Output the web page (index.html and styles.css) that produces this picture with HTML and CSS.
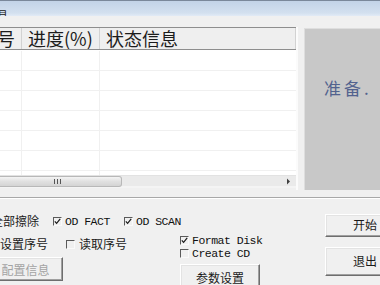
FILE: index.html
```html
<!DOCTYPE html>
<html>
<head>
<meta charset="utf-8">
<link rel="stylesheet" href="styles.css">
</head>
<body>
<div class="window">
  <div class="titlebar"><span class="title">工具</span></div>

  <div class="top">
    <div class="listview">
      <div class="lv-header">
        <div class="hcol c1">序号</div>
        <div class="hcol c2">进度(%)</div>
        <div class="hcol c3">状态信息</div>
      </div>
      <div class="lv-body">
        <div class="row"><span class="cell c1"></span><span class="cell c2"></span><span class="cell c3"></span></div>
        <div class="row"><span class="cell c1"></span><span class="cell c2"></span><span class="cell c3"></span></div>
        <div class="row"><span class="cell c1"></span><span class="cell c2"></span><span class="cell c3"></span></div>
        <div class="row"><span class="cell c1"></span><span class="cell c2"></span><span class="cell c3"></span></div>
        <div class="row"><span class="cell c1"></span><span class="cell c2"></span><span class="cell c3"></span></div>
        <div class="row"><span class="cell c1"></span><span class="cell c2"></span><span class="cell c3"></span></div>
        <div class="row"><span class="cell c1"></span><span class="cell c2"></span><span class="cell c3"></span></div>
      </div>
      <div class="hscroll">
        <div class="thumb"><span class="grip"></span></div>
        <div class="track"></div>
        <svg class="arrow" width="5" height="7" viewBox="0 0 5 7"><path d="M1 0.5 L4 3.5 L1 6.5 Z" fill="#404040"/></svg>
      </div>
    </div>
    <div class="status-panel"><span class="status-text">准备.</span></div>
  </div>

  <div class="separator"></div>

  <div class="bottom">
    <div class="left">
      <div class="row1">
        <label class="opt"><span class="cb"></span><span class="cn">全部擦除</span></label>
        <label class="opt"><span class="cb checked"><svg width="7" height="7" viewBox="0 0 7 7"><path d="M0.8 3.3 L2.6 5.4 L6.2 0.8" fill="none" stroke="#1a1a1a" stroke-width="1.2"/></svg></span><span class="en">OD FACT</span></label>
        <label class="opt"><span class="cb checked"><svg width="7" height="7" viewBox="0 0 7 7"><path d="M0.8 3.3 L2.6 5.4 L6.2 0.8" fill="none" stroke="#1a1a1a" stroke-width="1.2"/></svg></span><span class="en">OD SCAN</span></label>
      </div>
      <div class="lower">
        <div class="subleft">
          <div class="row2">
            <label class="opt"><span class="cb"></span><span class="cn">设置序号</span></label>
            <label class="opt wide"><span class="cb"></span><span class="cn">读取序号</span></label>
          </div>
          <button class="btn disabled cfg">配置信息</button>
        </div>
        <div class="options">
          <label class="opt line"><span class="cb checked"><svg width="7" height="7" viewBox="0 0 7 7"><path d="M0.8 3.3 L2.6 5.4 L6.2 0.8" fill="none" stroke="#1a1a1a" stroke-width="1.2"/></svg></span><span class="en">Format Disk</span></label>
          <label class="opt line"><span class="cb"></span><span class="en">Create CD</span></label>
          <button class="btn params">参数设置</button>
        </div>
      </div>
    </div>
    <div class="right">
      <button class="btn start">开始</button>
      <button class="btn quit">退出</button>
    </div>
  </div>
</div>
</body>
</html>
```

FILE: styles.css
```css
* { box-sizing: border-box; }

html, body {
  margin: 0;
  padding: 0;
}

body {
  width: 380px;
  height: 285px;
  overflow: hidden;
  background: #f0f0f0;
  font-family: "Noto Sans CJK SC", "Noto Sans", sans-serif;
  color: #1a1a1a;
}

.window {
  width: 380px;
  height: 285px;
  overflow: hidden;
}

/* title bar */
.titlebar {
  height: 16px;
  border-top: 1px solid #7b889a;
  background: linear-gradient(#c3d3e7, #d3e0ef 80%, #e2ebf6);
  overflow: hidden;
  white-space: nowrap;
}

.title {
  display: inline-block;
  margin-left: -14px;
  font-size: 11px;
  line-height: 15px;
  color: #202020;
}

/* top area */
.top {
  display: flex;
  margin-top: 11px;
  height: 163px;
}

.listview {
  margin-left: -27px;
  width: 325px;
  flex: none;
  display: flex;
  flex-direction: column;
  border-right: 2px solid #fbfbfb;
}

.lv-header {
  display: flex;
  height: 23px;
  border-top: 1px solid #8e8e8e;
  border-bottom: 1px solid #8e8e8e;
  background: #efefef;
}

.hcol {
  font-size: 18px;
  line-height: 21px;
  padding-left: 6px;
  color: #1c1c1c;
  border-right: 1px solid #d2d2d2;
  white-space: nowrap;
  overflow: hidden;
}

.c1 { width: 49px; flex: none; }
.c2 { width: 78px; flex: none; }
.c3 { flex: 1; }

.lv-body {
  height: 125px;
  background: #fff;
  padding-top: 1px;
  overflow: hidden;
}

.row {
  display: flex;
  height: 20px;
  border-bottom: 1px solid #f0f0f0;
}

.cell {
  height: 100%;
  border-right: 1px solid #f0f0f0;
}

.cell.c3 { border-right: none; }

.hscroll {
  display: flex;
  align-items: center;
  height: 13px;
  background: #eaeaea;
  border-top: 1px solid #e2e2e2;
  border-bottom: 2px solid #f4f4f4;
}

.thumb {
  width: 149px;
  height: 11px;
  flex: none;
  border: 1px solid #b8b8b8;
  border-left: none;
  border-radius: 0 3px 3px 0;
  background: linear-gradient(#f4f4f4, #e0e0e0 50%, #d4d4d4);
  display: flex;
  align-items: center;
  justify-content: flex-end;
  padding-right: 59px;
}

.grip {
  width: 8px;
  height: 5px;
  background: repeating-linear-gradient(90deg, #555 0 1px, transparent 1px 3px);
}

.track { flex: 1; }

.arrow {
  flex: none;
  margin-right: 5px;
}

.status-panel {
  flex: 1;
  margin-left: 6px;
  margin-top: 1px;
  background: #c8c8c8;
  border-left: 1px solid #dedede;
  border-top: 1px solid #dedede;
  padding-top: 47px;
  padding-left: 19px;
}

.status-text {
  font-size: 17px;
  line-height: 22px;
  color: #52628e;
  letter-spacing: 3px;
}

/* separator */
.separator {
  margin-top: 7px;
  height: 2px;
  border-top: 1px solid #a8a8a8;
  border-bottom: 1px solid #ffffff;
}

/* bottom area */
.bottom {
  display: flex;
  height: 85px;
}

.left {
  width: 325px;
  flex: none;
}

.opt {
  display: flex;
  align-items: center;
  gap: 3px;
  white-space: nowrap;
}

.cb {
  width: 9px;
  height: 9px;
  flex: none;
  border-top: 1px solid #5a5a5a;
  border-left: 1px solid #5a5a5a;
  border-right: 1px solid #fafafa;
  border-bottom: 1px solid #fafafa;
  display: flex;
  align-items: center;
  justify-content: center;
}

.cb svg { display: block; }

.cn {
  font-size: 12px;
  line-height: 16px;
  color: #1a1a1a;
}

.en {
  font-family: "Liberation Mono", "DejaVu Sans Mono", monospace;
  font-size: 11.5px;
  letter-spacing: -0.5px;
  line-height: 13px;
  color: #111;
}

.row1 {
  display: grid;
  grid-template-columns: 74px 71px auto;
  margin-top: 14px;
  margin-left: -21px;
  height: 16px;
}

.lower {
  display: flex;
}

.subleft {
  width: 180px;
  flex: none;
  display: flex;
  flex-direction: column;
}

.row2 {
  display: grid;
  grid-template-columns: 79px auto;
  margin-top: 7px;
  margin-left: -13px;
  height: 16px;
}

.row2 .opt { gap: 4px; }

.options {
  display: flex;
  flex-direction: column;
  padding-top: 5px;
}

.opt.line { height: 13px; gap: 3px; }

.btn {
  font-family: "Noto Sans CJK SC", sans-serif;
  font-size: 12px;
  color: #1a1a1a;
  background: #f0f0f0;
  border: 1px solid;
  border-color: #ffffff #6e6e6e #6e6e6e #ffffff;
  box-shadow: inset -1px -1px 0 #a0a0a0, inset 1px 1px 0 #e3e3e3;
  padding: 0;
  display: flex;
  align-items: center;
  justify-content: center;
}

.btn.disabled { color: #a3a3a3; }

.cfg {
  width: 75px;
  height: 24px;
  margin-top: 5px;
  margin-left: -12px;
}

.params {
  width: 80px;
  height: 26px;
  margin-top: 4px;
}

.right {
  display: flex;
  flex-direction: column;
}

.start {
  width: 80px;
  height: 23px;
  margin-top: 15px;
  padding-bottom: 2px;
}

.quit {
  width: 80px;
  height: 29px;
  margin-top: 10px;
  padding-bottom: 3px;
}
```
